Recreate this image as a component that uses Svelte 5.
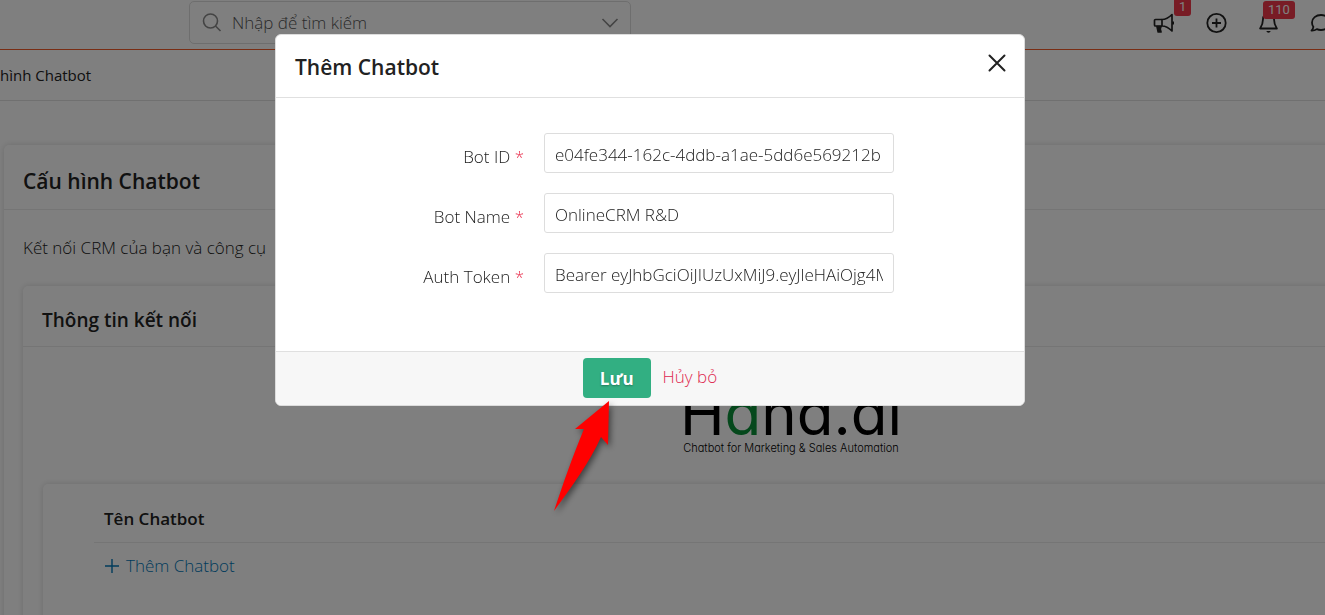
<script lang="ts">
  interface Field {
    id: string;
    label: string;
    value: string;
  }

  let open = $state(true);
  let keyword = $state('');
  let fields: Field[] = $state([
    { id: 'bot-id', label: 'Bot ID', value: 'e04fe344-162c-4ddb-a1ae-5dd6e569212b' },
    { id: 'bot-name', label: 'Bot Name', value: 'OnlineCRM R&D' },
    { id: 'auth-token', label: 'Auth Token', value: 'Bearer eyJhbGciOiJIUzUxMiJ9.eyJleHAiOjg4MDQ' }
  ]);

  function closeModal() {
    open = false;
  }

  function save(event: SubmitEvent) {
    event.preventDefault();
    closeModal();
  }
</script>

<div class="page">
  <header class="topbar">
    <div class="search">
      <svg width="20" height="20" viewBox="0 0 20 20" fill="none" stroke="currentColor" stroke-width="1.6" aria-hidden="true">
        <circle cx="8.500" cy="8" r="7"></circle>
        <path d="M13.500 13 18.500 18"></path>
      </svg>
      <input type="text" placeholder="Nhập để tìm kiếm" aria-label="Tìm kiếm" bind:value={keyword} />
      <button type="button" class="plain" aria-label="Mở rộng">
        <svg width="18" height="12" viewBox="0 0 18 12" fill="none" stroke="currentColor" stroke-width="1.6">
          <path d="M1.500 2 9 9.500 16.500 2"></path>
        </svg>
      </button>
    </div>

    <nav class="tools">
      <button type="button" class="plain tool" aria-label="Thông báo chung">
        <svg width="24" height="24" viewBox="0 0 24 24" fill="none" stroke="currentColor" stroke-width="1.700" stroke-linejoin="round">
          <path d="M10 8.500H3.500A1 1 0 0 0 2.500 9.500v4.500a1 1 0 0 0 1 1H10"></path>
          <path d="M10 8.500V15c4.500 0 7 2 10 5V3.500c-3 3-5.500 5-10 5z"></path>
          <path d="M21 10.500v3" stroke-width="2"></path>
          <path d="M5 15.500 6.200 21H9L8.200 18 9 15.500z" fill="currentColor"></path>
        </svg>
        <span class="badge single">1</span>
      </button>
      <button type="button" class="plain tool" aria-label="Tạo nhanh">
        <svg width="24" height="24" viewBox="0 0 24 24" fill="none" stroke="currentColor" stroke-width="1.8">
          <circle cx="12.500" cy="12" r="9.200"></circle>
          <path d="M12.500 7.500v9M8 12h9"></path>
        </svg>
      </button>
      <button type="button" class="plain tool" aria-label="Thông báo">
        <svg width="24" height="24" viewBox="0 0 24 24" fill="none" stroke="currentColor" stroke-width="1.8" stroke-linejoin="round">
          <path d="M12.500 2.500c-3.600 0-5.500 2.600-5.500 5.800 0 4.700-1.300 6.700-2.900 9.200h16.800c-1.600-2.500-2.900-4.500-2.900-9.200 0-3.200-1.900-5.800-5.500-5.800z"></path>
          <path d="M10.300 20a2.300 2.300 0 0 0 4.400 0z" fill="currentColor" stroke="none"></path>
        </svg>
        <span class="badge">110</span>
      </button>
      <button type="button" class="plain tool" aria-label="Tin nhắn">
        <svg width="24" height="24" viewBox="0 0 24 24" fill="none" stroke="currentColor" stroke-width="1.8" stroke-linejoin="round">
          <path d="M13 4c5 0 9 3.200 9 7.500s-4 7.500-9 7.500c-1.500 0-3-.3-4.200-.9-1.600 1.200-3.600 1.600-5.300 1.500 1-1 1.700-2.300 1.900-3.700C4.500 14.800 4 13.200 4 11.500 4 7.200 8 4 13 4z"></path>
        </svg>
      </button>
    </nav>
  </header>

  <div class="breadcrumb">hình Chatbot</div>

  <main>
    <section class="card">
      <h1>Cấu hình Chatbot</h1>
      <div class="outer-body">
        <p>Kết nối CRM của bạn và công cụ</p>

        <section class="card">
          <h2>Thông tin kết nối</h2>
          <div class="inner-body">
            <div class="logo">
              <span class="logo-name">H<em>a</em>na.ai</span>
              <span class="logo-tagline">Chatbot for Marketing &amp; Sales Automation</span>
            </div>

            <section class="card bots">
              <table>
                <thead>
                  <tr><th scope="col">Tên Chatbot</th></tr>
                </thead>
                <tbody>
                  <tr>
                    <td>
                      <a href="#add" onclick={() => (open = true)}>
                        <svg width="16" height="16" viewBox="0 0 16 16" stroke="currentColor" stroke-width="1.4" aria-hidden="true">
                          <path d="M8 1v14M1 8h14"></path>
                        </svg>
                        Thêm Chatbot
                      </a>
                    </td>
                  </tr>
                </tbody>
              </table>
            </section>
          </div>
        </section>
      </div>
    </section>
  </main>
</div>

{#if open}
  <div class="backdrop">
    <form class="modal" role="dialog" aria-labelledby="modal-title" onsubmit={save}>
      <div class="modal-header">
        <h3 id="modal-title">Thêm Chatbot</h3>
        <button type="button" class="plain" aria-label="Đóng" onclick={closeModal}>
          <svg width="18" height="18" viewBox="0 0 18 18" stroke="currentColor" stroke-width="2" stroke-linecap="round">
            <path d="M1.500 1.500 16.500 16.500M16.500 1.500 1.500 16.500"></path>
          </svg>
        </button>
      </div>

      <div class="modal-body">
        {#each fields as field (field.id)}
          <div class="field">
            <label for={field.id}>{field.label} <span class="required">*</span></label>
            <input id={field.id} type="text" bind:value={field.value} />
          </div>
        {/each}
      </div>

      <div class="modal-footer">
        <button type="submit" class="save">Lưu</button>
        <a href="#cancel" class="cancel" onclick={closeModal}>Hủy bỏ</a>
        <svg class="pointer" width="72" height="124" viewBox="0 0 72 124" aria-hidden="true">
          <path d="M60 5 59 49 52 41C41 66 23 90 5 115 14 88 23 62 35 33L26 33z" fill="#f00"></path>
        </svg>
      </div>
    </form>
  </div>
{/if}

<style>
  :global(body) {
    margin: 0;
    overflow: hidden;
  }

  .page,
  .backdrop {
    font-family: 'Open Sans', 'Noto Sans', sans-serif;
    font-size: 17px;
    font-weight: 300;
    color: #222;
  }

  .page {
    height: 100vh;
    overflow: hidden;
    background: #fff;
  }

  .plain {
    display: flex;
    padding: 0;
    border: none;
    background: none;
    color: inherit;
    cursor: pointer;
  }

  input {
    box-sizing: border-box;
    min-width: 0;
    font: inherit;
    color: inherit;
    outline: none;
  }

  .topbar {
    display: flex;
    justify-content: space-between;
    height: 49px;
    padding-left: 189px;
    border-bottom: 1px solid #f25a29;
  }

  .search {
    box-sizing: border-box;
    display: flex;
    align-items: center;
    gap: 10px;
    width: 442px;
    height: 43px;
    margin-top: 1px;
    padding: 0 11px 0 12px;
    border: 1px solid #ddd;
    border-radius: 5px;
    color: #888;
  }

  .search input {
    flex: 1;
    padding: 0;
    border: none;
    background: none;
  }

  .search input::placeholder {
    color: #555;
    opacity: 1;
  }

  .tools {
    display: flex;
    align-items: center;
    gap: 28px;
    height: 46px;
    margin-right: -7px;
  }

  .tool {
    position: relative;
  }

  .badge {
    position: absolute;
    top: -10px;
    left: 7px;
    padding: 0 5px;
    border-radius: 3px;
    background: #f0384a;
    color: #fff;
    font: 400 13px/18px Roboto, sans-serif;
  }

  .badge.single {
    top: -13px;
    left: 22px;
  }

  .breadcrumb {
    height: 50px;
    border-bottom: 1px solid #e0e0e0;
    font-size: 15px;
    font-weight: 400;
    line-height: 50px;
  }

  main {
    margin-right: -253px;
    padding: 44px 0 0 4px;
  }

  .card {
    border-radius: 5px;
    background: #fff;
    box-shadow: 0 0 6px rgba(0, 0, 0, 0.15);
  }

  h1,
  h2,
  h3,
  p {
    margin: 0;
  }

  h1,
  h2 {
    padding: 8px 19px 0;
    border-bottom: 1px solid #eaeaea;
    font-weight: 600;
  }

  h1,
  h3 {
    font-size: 21px;
  }

  h1 {
    line-height: 56px;
  }

  h2 {
    font-size: 19px;
    line-height: 52px;
  }

  .outer-body {
    padding: 26px 19px 40px;
  }

  .outer-body p {
    padding-bottom: 26px;
    line-height: 24px;
  }

  .inner-body {
    padding: 39px 20px 60px;
  }

  .logo {
    display: flex;
    flex-direction: column;
    align-items: center;
    height: 98px;
    color: #000;
    font-family: Inter, sans-serif;
    font-feature-settings: 'cv11';
  }

  .logo-name {
    font-size: 60px;
    font-weight: 400;
    line-height: 54px;
  }

  .logo-name em {
    color: #0a9038;
    font-style: normal;
  }

  .logo-tagline {
    font-size: 11px;
    font-weight: 300;
    line-height: 16px;
  }

  .bots {
    padding: 12px 51px 70px;
  }

  table {
    width: 100%;
    border-collapse: collapse;
    text-align: left;
  }

  th,
  td {
    padding: 0 10px;
    line-height: 46px;
  }

  th {
    border-bottom: 1px solid #eaeaea;
    font-weight: 600;
  }

  td a {
    display: inline-flex;
    align-items: center;
    gap: 6px;
    color: #0277b8;
    text-decoration: none;
  }

  .backdrop {
    position: fixed;
    inset: 0;
    display: flex;
    align-items: flex-start;
    justify-content: center;
    padding: 34px 25px 0 0;
    background: rgba(0, 0, 0, 0.5);
  }

  .modal {
    box-sizing: border-box;
    width: 750px;
    border: 1px solid #ddd;
    border-radius: 6px;
    background: #fff;
  }

  .modal-header {
    display: flex;
    align-items: flex-start;
    justify-content: space-between;
    padding: 19px 18px 0 19px;
    border-bottom: 1px solid #e0e0e0;
  }

  h3 {
    padding-bottom: 17px;
    font-weight: 600;
    line-height: 26px;
  }

  .modal-body {
    display: flex;
    flex-direction: column;
    gap: 20px;
    padding: 35px 130px 58px 0;
  }

  .field {
    display: flex;
    align-items: center;
    gap: 20px;
  }

  .field label {
    flex: 1;
    padding-top: 6px;
    text-align: right;
  }

  .required {
    color: #e8314f;
  }

  .field input {
    width: 350px;
    height: 40px;
    padding: 2px 10px 0;
    border: 1px solid #ddd;
    border-radius: 3px;
  }

  .modal-footer {
    position: relative;
    display: flex;
    align-items: flex-start;
    justify-content: center;
    gap: 12px;
    padding: 6px 0 7px;
    border-top: 1px solid #e0e0e0;
    border-radius: 0 0 5px 5px;
    background: #f7f7f7;
  }

  .save {
    height: 40px;
    padding: 0 17px;
    border: none;
    border-radius: 4px;
    background: #32af82;
    color: #fff;
    font: inherit;
    font-weight: 700;
    text-shadow: 0 1px 2px rgba(0, 0, 0, 0.3);
    cursor: pointer;
  }

  .cancel {
    color: #de2850;
    line-height: 38px;
    text-decoration: none;
  }

  .pointer {
    position: absolute;
    top: 44px;
    left: 273px;
    filter: drop-shadow(2px 3px 3px rgba(0, 0, 0, 0.5));
  }
</style>
